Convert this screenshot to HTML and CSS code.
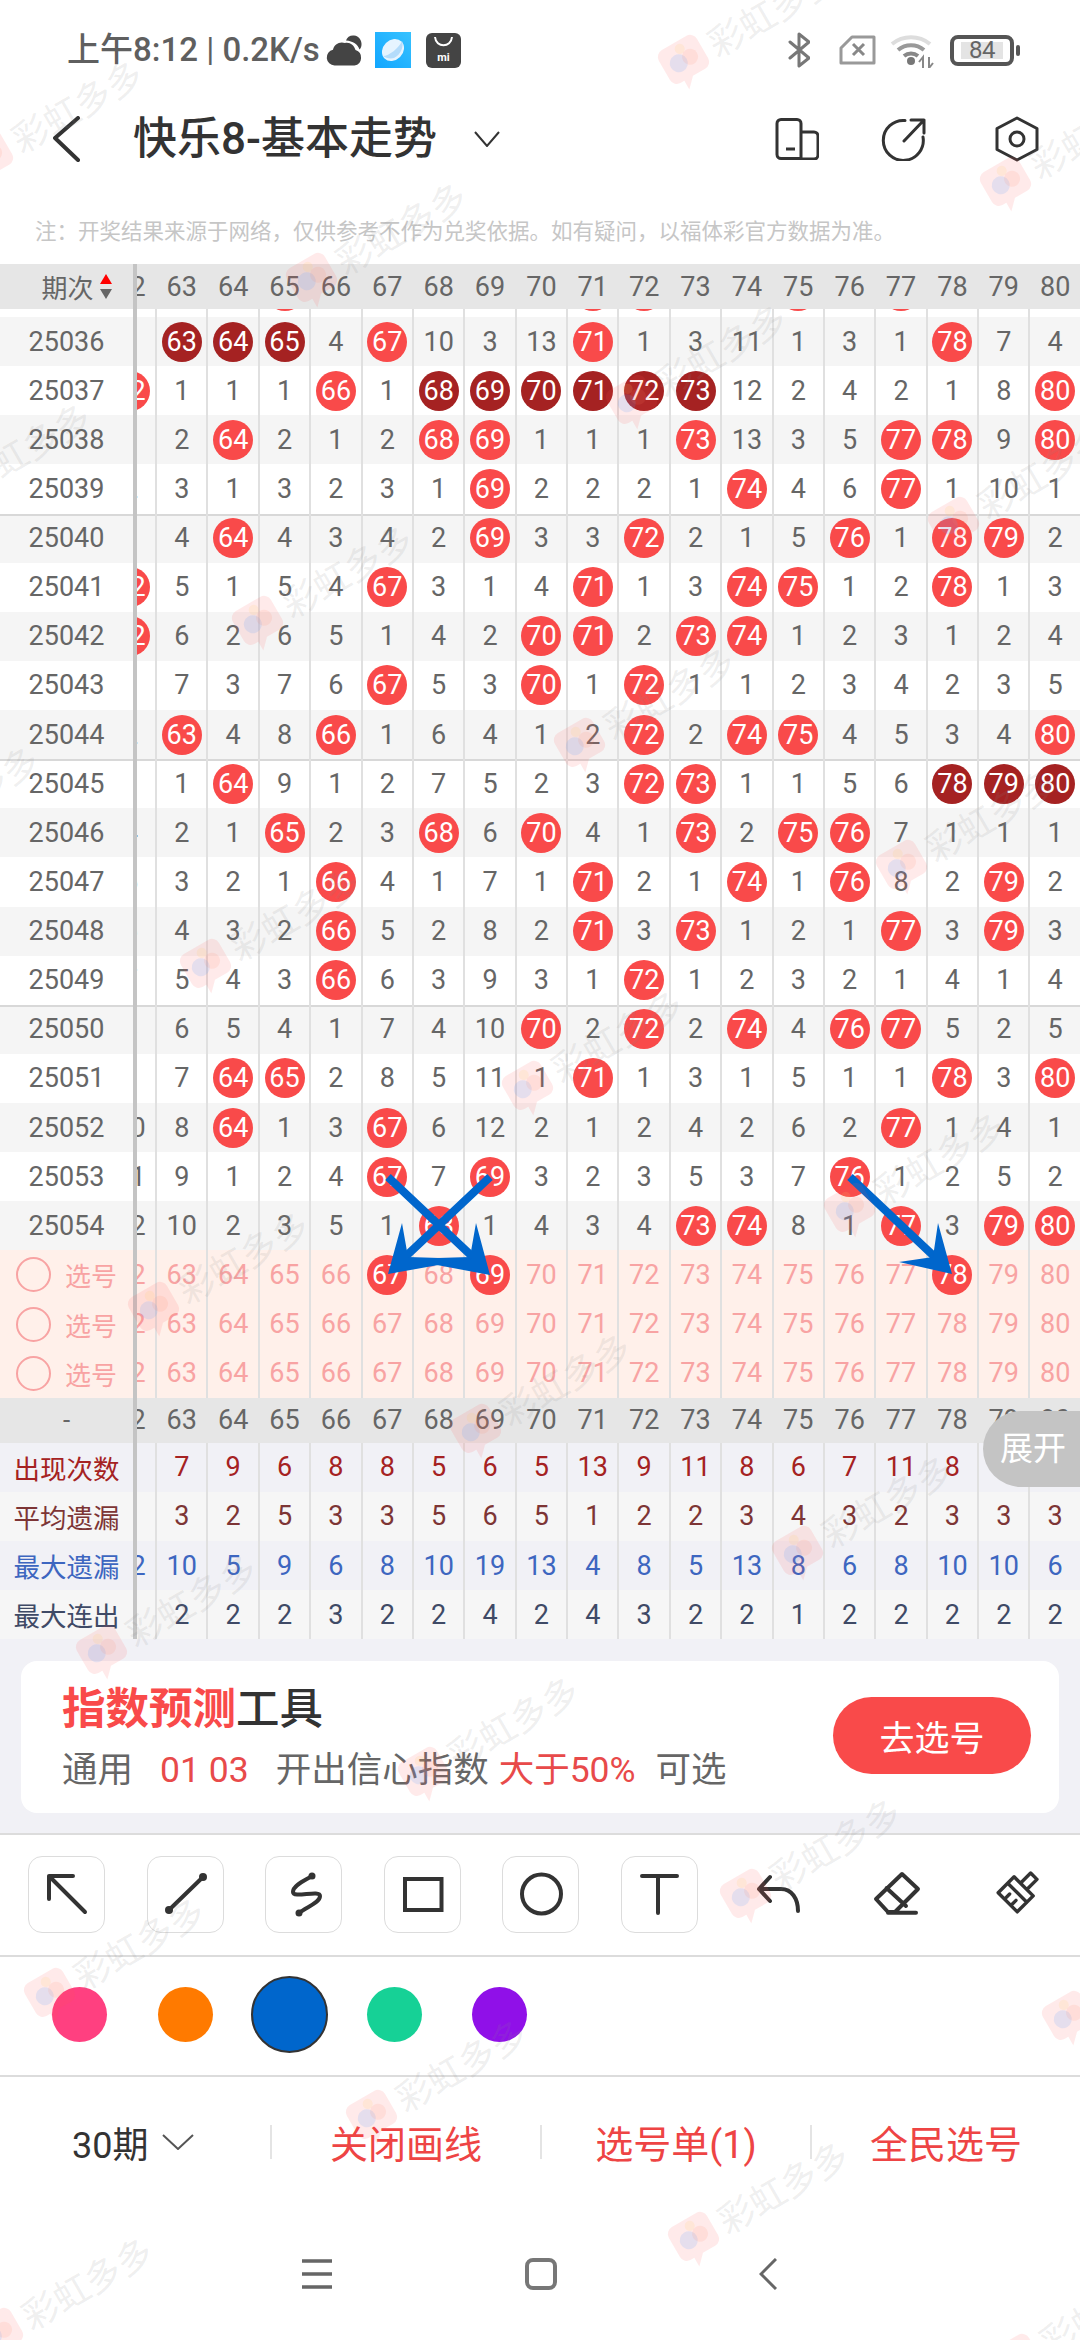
FILE: index.html
```html
<!DOCTYPE html>
<html lang="zh-CN">
<head>
<meta charset="utf-8">
<title>快乐8-基本走势</title>
<link rel="stylesheet" href="styles.css">
</head>
<body>
<div class="page">

<header class="status">
  <span class="clock">上午8:12 <span class="pipe">|</span> 0.2K/s</span>
  <svg class="st-cloud" width="36" height="31" viewBox="0 0 36 31"><path d="M8.500 30.500a8 8 0 0 1-1.500-15.800C8 9 14 6 19 8c5-1 9 2 10.500 7a8 8 0 0 1-1 15.500z" fill="#444"/><path d="M20 5.500C21 2 24.500 0 28 0.500c5 .5 8 5 7.500 9.500-.2 2-1 3.500-2 4.500C32 9.500 27 6 20 5.500z" fill="#444"/></svg>
  <svg class="st-app" width="36" height="36" viewBox="0 0 36 36"><defs><linearGradient id="ag" x1="0" y1="1" x2="1" y2="0"><stop offset="0" stop-color="#12a6ff"/><stop offset="1" stop-color="#37c2ff"/></linearGradient></defs><rect width="36" height="36" fill="url(#ag)"/><ellipse cx="18" cy="18" rx="12" ry="10" transform="rotate(-45 18 18)" fill="#e6f4ff"/><path d="M8 24c6 0 16-8 19-15 2 5-1 14-8 17-4 1-8 0-11-2z" fill="#b4dcfb"/></svg>
  <svg class="st-mi" width="35" height="35" viewBox="0 0 35 35"><rect width="35" height="35" rx="6" fill="#444"/><path d="M9 4c1 11 16 11 17 0" fill="none" stroke="#fff" stroke-width="2"/><text x="17.500" y="28" class="mi-t">mi</text></svg>
  <span class="st-space"></span>
  <svg class="st-bt" width="22" height="36" viewBox="0 0 22 36"><path d="M2 10l19 16-10 8V2l10 8L2 26" fill="none" stroke="#777" stroke-width="3" stroke-linejoin="round" stroke-linecap="round"/></svg>
  <svg class="st-sim" width="37" height="30" viewBox="0 0 37 30"><path d="M2 13L13 2h22v26H2z" fill="none" stroke="#999" stroke-width="3" stroke-linejoin="round"/><path d="M14 9l11 11M25 9L14 20" stroke="#888" stroke-width="3"/></svg>
  <svg class="st-wifi" width="46" height="36" viewBox="0 0 46 36"><path d="M2 12a30 30 0 0 1 38 0" fill="none" stroke="#ddd" stroke-width="4"/><path d="M8 18a20 20 0 0 1 26 0" fill="none" stroke="#999" stroke-width="4"/><path d="M14 24a11 11 0 0 1 14 0" fill="none" stroke="#888" stroke-width="4"/><circle cx="21" cy="29" r="4" fill="#777"/><path d="M33 36V25l-4 5M39 25v11l4-5" fill="none" stroke="#888" stroke-width="2"/></svg>
  <span class="batt"><span class="batt-in">84</span></span><span class="batt-cap"></span>
</header>

<nav class="topbar">
  <svg class="nb-back" width="28" height="46" viewBox="0 0 28 46"><path d="M25 2L2 22l23 22" fill="none" stroke="#333" stroke-width="4" stroke-linecap="round" stroke-linejoin="round"/></svg>
  <h1 class="title">快乐8-基本走势</h1>
  <svg class="nb-down" width="26" height="16" viewBox="0 0 26 16"><path d="M1 1l12 14L25 1" fill="none" stroke="#333" stroke-width="2"/></svg>
  <span class="st-space"></span>
  <svg class="nb-i1" width="44" height="42" viewBox="0 0 44 42"><path d="M6 1.500h16a4 4 0 0 1 4 4v35H6a4 4 0 0 1-4-4v-31a4 4 0 0 1 4-4zM26 14h13a4 4 0 0 1 4 4v19a4 4 0 0 1-4 4H26M11 31h9" fill="none" stroke="#333" stroke-width="3"/></svg>
  <svg class="nb-i2" width="46" height="44" viewBox="0 0 46 44"><path d="M24 3.500A20 20 0 1 0 42 20M23 24L43 3M30 3h13v13" fill="none" stroke="#333" stroke-width="3" stroke-linecap="round" stroke-linejoin="round"/></svg>
  <svg class="nb-i3" width="44" height="46" viewBox="0 0 44 46"><path d="M22 2l20 10.500v21L22 44 2 33.500v-21z" fill="none" stroke="#333" stroke-width="3" stroke-linejoin="round"/><circle cx="22" cy="23" r="7" fill="none" stroke="#333" stroke-width="3"/></svg>
</nav>

<p class="note">注：开奖结果来源于网络，仅供参考不作为兑奖依据。如有疑问，以福体彩官方数据为准。</p>

<section class="table">
  <div class="row hd top"><div class="lab"><span>期次</span><span class="sort"><i class="up"></i><i class="dn"></i></span></div><div class="cells"><span>62</span><span>63</span><span>64</span><span>65</span><span>66</span><span>67</span><span>68</span><span>69</span><span>70</span><span>71</span><span>72</span><span>73</span><span>74</span><span>75</span><span>76</span><span>77</span><span>78</span><span>79</span><span>80</span></div></div>
  <div class="row strip"><div class="lab"></div><div class="cells"><span></span><span></span><span></span><span><b>65</b></span><span></span><span></span><span></span><span></span><span></span><span><b>71</b></span><span><b>72</b></span><span></span><span></span><span><b>75</b></span><span></span><span><b>77</b></span><span></span><span></span><span></span></div></div>

  <div class="row alt"><div class="lab">25036</div><div class="cells"><span>1</span><span><b class="d">63</b></span><span><b class="d">64</b></span><span><b class="d">65</b></span><span>4</span><span><b>67</b></span><span>10</span><span>3</span><span>13</span><span><b>71</b></span><span>1</span><span>3</span><span>11</span><span>1</span><span>3</span><span>1</span><span><b>78</b></span><span>7</span><span>4</span></div></div>
  <div class="row"><div class="lab">25037</div><div class="cells"><span><b>62</b></span><span>1</span><span>1</span><span>1</span><span><b>66</b></span><span>1</span><span><b class="d">68</b></span><span><b class="d">69</b></span><span><b class="d">70</b></span><span><b class="d">71</b></span><span><b class="d">72</b></span><span><b class="d">73</b></span><span>12</span><span>2</span><span>4</span><span>2</span><span>1</span><span>8</span><span><b>80</b></span></div></div>
  <div class="row alt"><div class="lab">25038</div><div class="cells"><span>1</span><span>2</span><span><b>64</b></span><span>2</span><span>1</span><span>2</span><span><b>68</b></span><span><b>69</b></span><span>1</span><span>1</span><span>1</span><span><b>73</b></span><span>13</span><span>3</span><span>5</span><span><b>77</b></span><span><b>78</b></span><span>9</span><span><b>80</b></span></div></div>
  <div class="row"><div class="lab">25039</div><div class="cells"><span>2</span><span>3</span><span>1</span><span>3</span><span>2</span><span>3</span><span>1</span><span><b>69</b></span><span>2</span><span>2</span><span>2</span><span>1</span><span><b>74</b></span><span>4</span><span>6</span><span><b>77</b></span><span>1</span><span>10</span><span>1</span></div></div>
  <div class="row alt sep"><div class="lab">25040</div><div class="cells"><span>3</span><span>4</span><span><b>64</b></span><span>4</span><span>3</span><span>4</span><span>2</span><span><b>69</b></span><span>3</span><span>3</span><span><b>72</b></span><span>2</span><span>1</span><span>5</span><span><b>76</b></span><span>1</span><span><b>78</b></span><span><b>79</b></span><span>2</span></div></div>
  <div class="row"><div class="lab">25041</div><div class="cells"><span><b>62</b></span><span>5</span><span>1</span><span>5</span><span>4</span><span><b>67</b></span><span>3</span><span>1</span><span>4</span><span><b>71</b></span><span>1</span><span>3</span><span><b>74</b></span><span><b>75</b></span><span>1</span><span>2</span><span><b>78</b></span><span>1</span><span>3</span></div></div>
  <div class="row alt"><div class="lab">25042</div><div class="cells"><span><b>62</b></span><span>6</span><span>2</span><span>6</span><span>5</span><span>1</span><span>4</span><span>2</span><span><b>70</b></span><span><b>71</b></span><span>2</span><span><b>73</b></span><span><b>74</b></span><span>1</span><span>2</span><span>3</span><span>1</span><span>2</span><span>4</span></div></div>
  <div class="row"><div class="lab">25043</div><div class="cells"><span>1</span><span>7</span><span>3</span><span>7</span><span>6</span><span><b>67</b></span><span>5</span><span>3</span><span><b>70</b></span><span>1</span><span><b>72</b></span><span>1</span><span>1</span><span>2</span><span>3</span><span>4</span><span>2</span><span>3</span><span>5</span></div></div>
  <div class="row alt"><div class="lab">25044</div><div class="cells"><span>2</span><span><b>63</b></span><span>4</span><span>8</span><span><b>66</b></span><span>1</span><span>6</span><span>4</span><span>1</span><span>2</span><span><b>72</b></span><span>2</span><span><b>74</b></span><span><b>75</b></span><span>4</span><span>5</span><span>3</span><span>4</span><span><b>80</b></span></div></div>
  <div class="row sep"><div class="lab">25045</div><div class="cells"><span>3</span><span>1</span><span><b>64</b></span><span>9</span><span>1</span><span>2</span><span>7</span><span>5</span><span>2</span><span>3</span><span><b>72</b></span><span><b>73</b></span><span>1</span><span>1</span><span>5</span><span>6</span><span><b class="d">78</b></span><span><b class="d">79</b></span><span><b class="d">80</b></span></div></div>
  <div class="row alt"><div class="lab">25046</div><div class="cells"><span>4</span><span>2</span><span>1</span><span><b>65</b></span><span>2</span><span>3</span><span><b>68</b></span><span>6</span><span><b>70</b></span><span>4</span><span>1</span><span><b>73</b></span><span>2</span><span><b>75</b></span><span><b>76</b></span><span>7</span><span>1</span><span>1</span><span>1</span></div></div>
  <div class="row"><div class="lab">25047</div><div class="cells"><span>5</span><span>3</span><span>2</span><span>1</span><span><b>66</b></span><span>4</span><span>1</span><span>7</span><span>1</span><span><b>71</b></span><span>2</span><span>1</span><span><b>74</b></span><span>1</span><span><b>76</b></span><span>8</span><span>2</span><span><b>79</b></span><span>2</span></div></div>
  <div class="row alt"><div class="lab">25048</div><div class="cells"><span>6</span><span>4</span><span>3</span><span>2</span><span><b>66</b></span><span>5</span><span>2</span><span>8</span><span>2</span><span><b>71</b></span><span>3</span><span><b>73</b></span><span>1</span><span>2</span><span>1</span><span><b>77</b></span><span>3</span><span><b>79</b></span><span>3</span></div></div>
  <div class="row"><div class="lab">25049</div><div class="cells"><span>7</span><span>5</span><span>4</span><span>3</span><span><b>66</b></span><span>6</span><span>3</span><span>9</span><span>3</span><span>1</span><span><b>72</b></span><span>1</span><span>2</span><span>3</span><span>2</span><span>1</span><span>4</span><span>1</span><span>4</span></div></div>
  <div class="row alt sep"><div class="lab">25050</div><div class="cells"><span>8</span><span>6</span><span>5</span><span>4</span><span>1</span><span>7</span><span>4</span><span>10</span><span><b>70</b></span><span>2</span><span><b>72</b></span><span>2</span><span><b>74</b></span><span>4</span><span><b>76</b></span><span><b>77</b></span><span>5</span><span>2</span><span>5</span></div></div>
  <div class="row"><div class="lab">25051</div><div class="cells"><span>9</span><span>7</span><span><b>64</b></span><span><b>65</b></span><span>2</span><span>8</span><span>5</span><span>11</span><span>1</span><span><b>71</b></span><span>1</span><span>3</span><span>1</span><span>5</span><span>1</span><span>1</span><span><b>78</b></span><span>3</span><span><b>80</b></span></div></div>
  <div class="row alt"><div class="lab">25052</div><div class="cells"><span>10</span><span>8</span><span><b>64</b></span><span>1</span><span>3</span><span><b>67</b></span><span>6</span><span>12</span><span>2</span><span>1</span><span>2</span><span>4</span><span>2</span><span>6</span><span>2</span><span><b>77</b></span><span>1</span><span>4</span><span>1</span></div></div>
  <div class="row"><div class="lab">25053</div><div class="cells"><span>11</span><span>9</span><span>1</span><span>2</span><span>4</span><span><b>67</b></span><span>7</span><span><b>69</b></span><span>3</span><span>2</span><span>3</span><span>5</span><span>3</span><span>7</span><span><b>76</b></span><span>1</span><span>2</span><span>5</span><span>2</span></div></div>
  <div class="row alt"><div class="lab">25054</div><div class="cells"><span>12</span><span>10</span><span>2</span><span>3</span><span>5</span><span>1</span><span><b>68</b></span><span>1</span><span>4</span><span>3</span><span>4</span><span><b>73</b></span><span><b>74</b></span><span>8</span><span>1</span><span><b>77</b></span><span>3</span><span><b>79</b></span><span><b>80</b></span></div></div>

  <div class="row pick"><div class="lab"><i class="ring"></i>选号</div><div class="cells"><span>62</span><span>63</span><span>64</span><span>65</span><span>66</span><span><b>67</b></span><span>68</span><span><b>69</b></span><span>70</span><span>71</span><span>72</span><span>73</span><span>74</span><span>75</span><span>76</span><span>77</span><span><b>78</b></span><span>79</span><span>80</span></div></div>
  <div class="row pick"><div class="lab"><i class="ring"></i>选号</div><div class="cells"><span>62</span><span>63</span><span>64</span><span>65</span><span>66</span><span>67</span><span>68</span><span>69</span><span>70</span><span>71</span><span>72</span><span>73</span><span>74</span><span>75</span><span>76</span><span>77</span><span>78</span><span>79</span><span>80</span></div></div>
  <div class="row pick"><div class="lab"><i class="ring"></i>选号</div><div class="cells"><span>62</span><span>63</span><span>64</span><span>65</span><span>66</span><span>67</span><span>68</span><span>69</span><span>70</span><span>71</span><span>72</span><span>73</span><span>74</span><span>75</span><span>76</span><span>77</span><span>78</span><span>79</span><span>80</span></div></div>

  <div class="row hd"><div class="lab">-</div><div class="cells"><span>62</span><span>63</span><span>64</span><span>65</span><span>66</span><span>67</span><span>68</span><span>69</span><span>70</span><span>71</span><span>72</span><span>73</span><span>74</span><span>75</span><span>76</span><span>77</span><span>78</span><span>79</span><span>80</span></div></div>

  <div class="row stat s1"><div class="lab">出现次数</div><div class="cells"><span></span><span>7</span><span>9</span><span>6</span><span>8</span><span>8</span><span>5</span><span>6</span><span>5</span><span>13</span><span>9</span><span>11</span><span>8</span><span>6</span><span>7</span><span>11</span><span>8</span><span>7</span><span>9</span></div></div>
  <div class="row stat s2"><div class="lab">平均遗漏</div><div class="cells"><span></span><span>3</span><span>2</span><span>5</span><span>3</span><span>3</span><span>5</span><span>6</span><span>5</span><span>1</span><span>2</span><span>2</span><span>3</span><span>4</span><span>3</span><span>2</span><span>3</span><span>3</span><span>3</span></div></div>
  <div class="row stat s3"><div class="lab">最大遗漏</div><div class="cells"><span>12</span><span>10</span><span>5</span><span>9</span><span>6</span><span>8</span><span>10</span><span>19</span><span>13</span><span>4</span><span>8</span><span>5</span><span>13</span><span>8</span><span>6</span><span>8</span><span>10</span><span>10</span><span>6</span></div></div>
  <div class="row stat s4"><div class="lab">最大连出</div><div class="cells"><span></span><span>2</span><span>2</span><span>2</span><span>3</span><span>2</span><span>2</span><span>4</span><span>2</span><span>4</span><span>3</span><span>2</span><span>2</span><span>1</span><span>2</span><span>2</span><span>2</span><span>2</span><span>2</span></div></div>

  <button class="expand">展开</button>
</section>

<section class="promo">
  <div class="card">
    <div class="card-text">
      <div class="card-title"><em>指数预测</em>工具</div>
      <div class="card-sub">通用<em class="m1">01 03</em><span class="m2">开出信心指数</span><em class="m3">大于50%</em><span class="m4">可选</span></div>
    </div>
    <button class="go">去选号</button>
  </div>
</section>

<section class="tools">
  <span class="tool box"><svg width="76" height="76" viewBox="0 0 76 76"><path d="M56 56L20 20M44 20H20v23" class="ic"/></svg></span>
  <span class="tool box"><svg width="76" height="76" viewBox="0 0 76 76"><path d="M22 54L56 21" class="ic"/><circle cx="22" cy="54" r="4" class="dot"/><circle cx="56" cy="21" r="4" class="dot"/></svg></span>
  <span class="tool box"><svg width="76" height="76" viewBox="0 0 76 76"><path d="M46 20C40 24 27 29 27 36C27 43 54 33 54 40C54 47 40 51 33 57" class="ic"/><circle cx="46" cy="20" r="3.500" class="dot"/><circle cx="33" cy="57" r="3.500" class="dot"/></svg></span>
  <span class="tool box"><svg width="76" height="76" viewBox="0 0 76 76"><rect x="21" y="23" width="36.500" height="31" class="ic sq"/></svg></span>
  <span class="tool box"><svg width="76" height="76" viewBox="0 0 76 76"><circle cx="38.500" cy="38" r="19.500" class="ic"/></svg></span>
  <span class="tool box"><svg width="76" height="76" viewBox="0 0 76 76"><path d="M21 20h35M37 20v37" class="ic"/></svg></span>
  <span class="tool"><svg width="76" height="76" viewBox="0 0 76 76"><path d="M30 21L19 33l11 12M19 33h22c11 0 17 10 17 22" class="ic"/></svg></span>
  <span class="tool"><svg width="76" height="76" viewBox="0 0 76 76"><path d="M44 18l16 15-23 23h-7L18 43zM28.500 32L48 50M30 56.700h28" class="ic"/></svg></span>
  <span class="tool"><svg width="76" height="76" viewBox="0 0 76 76"><g transform="translate(39 38) rotate(45) scale(.9)"><path d="M-5-12v-16H5v16M-15-12h30v25h-30zM-15-2h30M-5 13V5M5 13V5" class="ic thin"/></g></svg></span>
</section>

<section class="swatches">
  <i class="sw c1"></i><i class="sw c2"></i><i class="sw big"></i><i class="sw c4"></i><i class="sw c5"></i>
</section>

<section class="tabs">
  <div class="tab first">30期<svg width="32" height="16" viewBox="0 0 32 16"><path d="M1 1l15 14L31 1" fill="none" stroke="#555" stroke-width="2"/></svg></div>
  <div class="tab">关闭画线</div>
  <div class="tab">选号单(1)</div>
  <div class="tab">全民选号</div>
</section>

<footer class="sysnav">
  <svg width="32" height="30" viewBox="0 0 32 30"><path d="M1 2h30M1 15h30M1 28h30" stroke="#666" stroke-width="3.500"/></svg>
  <svg width="32" height="32" viewBox="0 0 32 32"><rect x="2" y="2" width="28" height="28" rx="6" fill="none" stroke="#777" stroke-width="4"/></svg>
  <svg width="18" height="32" viewBox="0 0 18 32"><path d="M17 1L2 16l15 15" fill="none" stroke="#666" stroke-width="3"/></svg>
</footer>

<svg class="arrows" width="1080" height="2340" viewBox="0 0 1080 2340">
  <path d="M388 1177L476 1260M490 1177L404 1258M850 1177L938 1260" class="ar-line"/>
  <path d="M490 1275L476 1223L470 1257L405 1259z" class="ar-head"/>
  <path d="M388 1274L402 1223L408 1257L472 1259z" class="ar-head"/>
  <path d="M952 1274L938 1223L933 1257L899 1262z" class="ar-head"/>
</svg>

<svg class="marks" width="1080" height="2340" viewBox="0 0 1080 2340">
  <defs>
    <g id="wm-logo"><path d="M-22-14a8 8 0 0 1 8-8h28a8 8 0 0 1 8 8v22a8 8 0 0 1-8 8H0L-10 26V16h-4a8 8 0 0 1-8-8z" class="wl-a"/><circle cx="-6" cy="-2" r="9" class="wl-b"/><circle cx="7" cy="-2" r="8" class="wl-c"/><circle cx="2" cy="-14" r="5" class="wl-d"/></g>
  </defs>
  <g transform="translate(685 62) rotate(-30)"><use href="#wm-logo"/><text x="30" y="13" class="wm">彩虹多多</text></g>
  <g transform="translate(1007 184) rotate(-30)"><use href="#wm-logo"/><text x="30" y="13" class="wm">彩虹多多</text></g>
  <g transform="translate(-11 158) rotate(-30)"><use href="#wm-logo"/><text x="30" y="13" class="wm">彩虹多多</text></g>
  <g transform="translate(313 280) rotate(-30)"><use href="#wm-logo"/><text x="30" y="13" class="wm">彩虹多多</text></g>
  <g transform="translate(633 402) rotate(-30)"><use href="#wm-logo"/><text x="30" y="13" class="wm">彩虹多多</text></g>
  <g transform="translate(955 524) rotate(-30)"><use href="#wm-logo"/><text x="30" y="13" class="wm">彩虹多多</text></g>
  <g transform="translate(-63 501) rotate(-30)"><use href="#wm-logo"/><text x="30" y="13" class="wm">彩虹多多</text></g>
  <g transform="translate(259 623) rotate(-30)"><use href="#wm-logo"/><text x="30" y="13" class="wm">彩虹多多</text></g>
  <g transform="translate(581 745) rotate(-30)"><use href="#wm-logo"/><text x="30" y="13" class="wm">彩虹多多</text></g>
  <g transform="translate(903 867) rotate(-30)"><use href="#wm-logo"/><text x="30" y="13" class="wm">彩虹多多</text></g>
  <g transform="translate(-115 844) rotate(-30)"><use href="#wm-logo"/><text x="30" y="13" class="wm">彩虹多多</text></g>
  <g transform="translate(207 966) rotate(-30)"><use href="#wm-logo"/><text x="30" y="13" class="wm">彩虹多多</text></g>
  <g transform="translate(529 1088) rotate(-30)"><use href="#wm-logo"/><text x="30" y="13" class="wm">彩虹多多</text></g>
  <g transform="translate(851 1210) rotate(-30)"><use href="#wm-logo"/><text x="30" y="13" class="wm">彩虹多多</text></g>
  <g transform="translate(155 1309) rotate(-30)"><use href="#wm-logo"/><text x="30" y="13" class="wm">彩虹多多</text></g>
  <g transform="translate(477 1431) rotate(-30)"><use href="#wm-logo"/><text x="30" y="13" class="wm">彩虹多多</text></g>
  <g transform="translate(799 1553) rotate(-30)"><use href="#wm-logo"/><text x="30" y="13" class="wm">彩虹多多</text></g>
  <g transform="translate(103 1652) rotate(-30)"><use href="#wm-logo"/><text x="30" y="13" class="wm">彩虹多多</text></g>
  <g transform="translate(425 1774) rotate(-30)"><use href="#wm-logo"/><text x="30" y="13" class="wm">彩虹多多</text></g>
  <g transform="translate(747 1896) rotate(-30)"><use href="#wm-logo"/><text x="30" y="13" class="wm">彩虹多多</text></g>
  <g transform="translate(1069 2018) rotate(-30)"><use href="#wm-logo"/><text x="30" y="13" class="wm">彩虹多多</text></g>
  <g transform="translate(51 1995) rotate(-30)"><use href="#wm-logo"/><text x="30" y="13" class="wm">彩虹多多</text></g>
  <g transform="translate(373 2117) rotate(-30)"><use href="#wm-logo"/><text x="30" y="13" class="wm">彩虹多多</text></g>
  <g transform="translate(695 2239) rotate(-30)"><use href="#wm-logo"/><text x="30" y="13" class="wm">彩虹多多</text></g>
  <g transform="translate(1017 2361) rotate(-30)"><use href="#wm-logo"/><text x="30" y="13" class="wm">彩虹多多</text></g>
  <g transform="translate(-1 2335) rotate(-30)"><use href="#wm-logo"/><text x="30" y="13" class="wm">彩虹多多</text></g>
</svg>

</div>
</body>
</html>
```
FILE: styles.css
```css
* { box-sizing: border-box; }
html, body { margin: 0; padding: 0; background: #fff; }
body { font-family: Roboto, "Noto Sans CJK SC", sans-serif; color: #333; }
.page { position: relative; width: 1080px; height: 2340px; overflow: hidden; background: #fff; }

/* status bar */
.status { height: 96px; display: flex; align-items: center; padding: 4px 0 0 67px; }
.clock { font-size: 33px; font-weight: 500; color: #5f5f5f; white-space: nowrap; line-height: 40px; }
.pipe { font-weight: 400; }
.st-cloud { margin-left: 6px; }
.st-app { margin-left: 13px; }
.st-mi { margin-left: 15px; }
.mi-t { font: 700 11px Roboto, sans-serif; fill: #fff; text-anchor: middle; }
.st-space { flex: 1; }
.st-bt { margin-right: 29px; }
.st-sim { margin-right: 14px; }
.st-wifi { margin-right: 14px; }
.batt { width: 64px; height: 31px; border: 4px solid #555; border-radius: 8px; display: flex; align-items: center; justify-content: center; }
.batt-in { width: 42px; height: 17px; background: #e4e4e4; font-size: 24px; line-height: 17px; color: #666; text-align: center; letter-spacing: -0.5px; }
.batt-cap { width: 4px; height: 11px; background: #555; border-radius: 2px; margin: 0 60px 0 2px; }

/* title bar */
.topbar { height: 86px; display: flex; align-items: center; padding-left: 53px; padding-right: 41px; }
.title { margin: 0 0 0 52px; font-size: 44px; font-weight: 500; color: #333; line-height: 60px; white-space: nowrap; }
.nb-down { margin-left: 37px; }
.nb-i1 { margin-right: 62px; }
.nb-i2 { margin-right: 68px; }

.note { margin: 0; height: 82px; padding: 35px 0 0 35px; font-size: 21.500px; line-height: 30px; color: #c6c6c6; white-space: nowrap; }

/* trend table */
.table { position: relative; }
.row { display: flex; height: 49.13px; background: #fff; font-size: 27px; color: #666; }
.row.alt { background: #f5f5f5; }
.row.sep { box-shadow: inset 0 2px 0 #d8d8d8; }
.row.hd { height: 45px; background: #e6e6e6; }
.row.strip { height: 8px; overflow: hidden; }
.lab { width: 137px; flex: none; border-right: 4px solid #c4c4c4; display: flex; align-items: center; justify-content: center; white-space: nowrap; }
.cells { flex: 1; overflow: hidden; display: flex; }
.cells > span { width: 51.38px; flex: none; margin: 0; border-left: 2px solid #e0e0e0; display: flex; align-items: center; justify-content: center; white-space: nowrap; }
.cells > span:first-child { margin-left: -33.3px; }
.hd .cells > span { border-left-color: transparent; }
.hd .lab { gap: 6px; font-size: 26px; }
.top .lab { padding-left: 20px; }
.strip .cells > span { align-items: flex-end; }
.strip b { margin-bottom: 6px; }
.cells b { width: 40px; height: 40px; flex: none; border-radius: 50%; background: #f94a4a; color: #fff; font-weight: 400; display: flex; align-items: center; justify-content: center; }
.cells b.d { background: #a52222; }
.sort { display: flex; flex-direction: column; gap: 5px; }
.sort i { display: block; width: 0; height: 0; border-left: 6.500px solid transparent; border-right: 6.500px solid transparent; }
.sort .up { border-bottom: 10px solid #f00; }
.sort .dn { border-top: 10px solid #666; }

.row.pick { background: #fff0ea; color: #f8a3a3; }
.pick .lab { justify-content: flex-start; padding-left: 16px; gap: 14px; font-size: 26px; }
.ring { width: 35px; height: 35px; flex: none; border: 2px solid #f8a3a3; border-radius: 50%; }

.stat .lab { font-size: 26.500px; }
.row.s1 { background: #f1f1f6; color: #a52222; }
.row.s2 { background: #f6f6f6; color: #7d3535; }
.row.s3 { background: #f1f1f6; color: #3d66c0; }
.row.s4 { background: #f6f6f6; color: #3f4a66; }

.expand { position: absolute; right: 0; bottom: 152px; width: 97px; height: 76px; border: 0; padding: 0 0 0 3px; border-radius: 38px 0 0 38px; background: #c4c4c4; color: #fff; font: 400 33px Roboto, "Noto Sans CJK SC", sans-serif; line-height: 72px; }

/* promo */
.promo { height: 193.500px; padding: 21.500px 21px 19px; background: #f1f1f6; }
.card { height: 152px; background: #fff; border-radius: 16px; display: flex; align-items: center; justify-content: space-between; padding: 0 28px 0 41px; }
.card-text { padding-top: 6px; }
.card-title { font-size: 43.500px; font-weight: 500; line-height: 60px; color: #333; margin-top: -7px; }
.card-title em { font-style: normal; font-weight: 700; color: #f94a4a; }
.card-sub { font-size: 35.500px; line-height: 46px; color: #666; white-space: nowrap; margin-top: 7px; }
.card-sub em { font-style: normal; color: #e84a4a; }
.m1 { margin-left: 27px; }
.m2 { margin-left: 27px; }
.m3 { margin-left: 10px; }
.m4 { margin-left: 20px; }
.go { width: 198px; height: 77px; border: 0; border-radius: 39px; background: #f94a4a; color: #fff; font: 400 35px Roboto, "Noto Sans CJK SC", sans-serif; margin-top: -2px; }

/* drawing tools */
.tools { height: 122px; border-top: 2px solid #dcdcdc; display: flex; align-items: flex-start; gap: 41.500px; padding: 21px 0 0 28px; }
.tool { width: 77px; height: 77px; flex: none; border: 1.500px solid transparent; border-radius: 14px; display: block; }
.tool svg { display: block; margin: -0.500px; }
.tool.box { border-color: #dcdcdc; }
.ic { fill: none; stroke: #333; stroke-width: 4; stroke-linecap: round; stroke-linejoin: round; }
.ic.sq { stroke-linecap: butt; stroke-linejoin: miter; }
.ic.thin { stroke-width: 3.800; }
.dot { fill: #333; }

.swatches { height: 120px; border-top: 2px solid #dcdcdc; display: flex; align-items: center; gap: 50.500px; padding: 0 0 2px 52px; }
.sw { width: 55px; height: 55px; border-radius: 50%; flex: none; display: block; }
.c1 { background: #ff4080; }
.c2 { background: #ff7a00; }
.big { width: 77px; height: 77px; margin: 0 -12px; background: #0066cc; border: 2px solid #333; }
.c4 { background: #16d196; }
.c5 { background: #9010e8; }

/* bottom tabs */
.tabs { height: 134px; border-top: 2px solid #dcdcdc; display: flex; align-items: center; padding-bottom: 2px; }
.tab { width: 270px; height: 34px; flex: none; display: flex; align-items: center; justify-content: center; font-size: 38px; color: #ee4444; border-left: 2px solid #e4e4e4; white-space: nowrap; }
.tab.first { border-left: 0; color: #333; justify-content: flex-start; padding-left: 72px; gap: 14px; font-size: 36px; }

.sysnav { height: 130px; display: flex; align-items: center; padding: 0 0 0 301px; gap: 192px; }
.sysnav svg:last-child { margin-left: 10px; }

/* overlays */
.arrows { position: absolute; left: 0; top: 0; pointer-events: none; }
.ar-line { fill: none; stroke: #0066cc; stroke-width: 8; }
.ar-head { fill: #0066cc; }
.marks { position: absolute; left: 0; top: 0; pointer-events: none; }
.wm { font: 400 36px "Noto Sans CJK SC", sans-serif; fill: #888; fill-opacity: .14; }
.wl-a { fill: #ff5050; fill-opacity: .12; }
.wl-b { fill: #60a0ff; fill-opacity: .16; }
.wl-c { fill: #ff8060; fill-opacity: .12; }
.wl-d { fill: #ffd060; fill-opacity: .14; }
```
